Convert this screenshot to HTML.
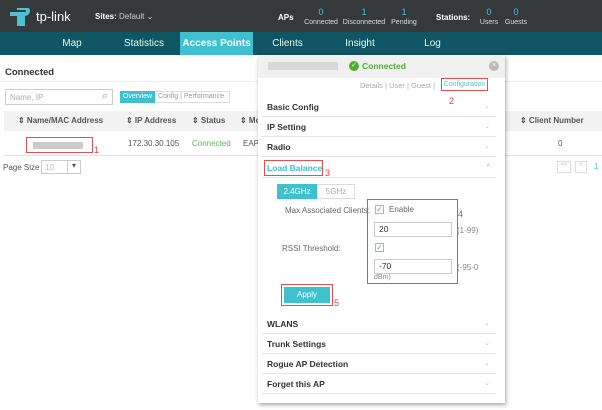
<!DOCTYPE html>
<html><head><meta charset="utf-8"><style>
*{box-sizing:border-box;margin:0;padding:0}
body{width:602px;height:410px;overflow:hidden;background:#fff;font-family:"Liberation Sans",sans-serif;font-size:8px;color:#555;position:relative}
.a{position:absolute}
.top{left:0;top:0;width:602px;height:32px;background:#36393b}
.nav{left:0;top:32px;width:602px;height:23px;background:#0f5563}
.nav span{position:absolute;top:0;height:23px;line-height:23px;color:#dfe;font-size:10px;text-align:center}
.b{font-weight:bold}
.cell{position:absolute;line-height:20px;font-size:8px}
.row{position:absolute;left:262px;width:234px;height:20px;border-bottom:1px solid #e4e4e4;font-weight:bold;font-size:8.5px;color:#333;line-height:20px;padding-left:5px}
.row i{position:absolute;right:6px;top:0;font-style:normal;color:#bbb;font-size:7px;font-weight:normal}
.red{border:1px solid #e05050}
.rn{color:#e04040;font-size:9px}
.inp{position:absolute;border:1px solid #ccc;background:#fff;height:15px;font-size:8.5px;color:#333;padding-left:4px;line-height:13px}
.cb{position:absolute;width:9px;height:9px;border:1px solid #7cc;color:#3bb;font-size:8px;line-height:7px;text-align:center}
</style></head><body>
<div class="a top"></div>
<svg class="a" style="left:8px;top:8px" width="26" height="18" viewBox="0 0 26 18"><path d="M2 6h9v10h4V6h2a3 3 0 0 0 0-6H9" fill="none" stroke="#4cc3cf" stroke-width="4"/></svg>
<div class="a" style="left:36px;top:9px;color:#fff;font-size:13px">tp-link</div>
<div class="a b" style="left:95px;top:12px;color:#fff;font-size:8px">Sites:<span style="font-weight:normal;color:#ccc"> Default ⌄</span></div>
<div class="a b" style="left:278px;top:13px;color:#fff">APs</div>
<div class="a" style="left:303px;top:8px;width:36px;text-align:center;color:#4cc3cf;font-size:9px;line-height:9px">0<br><span style="font-size:7px;color:#ddd">Connected</span></div>
<div class="a" style="left:340px;top:8px;width:48px;text-align:center;color:#4cc3cf;font-size:9px;line-height:9px">1<br><span style="font-size:7px;color:#ddd">Disconnected</span></div>
<div class="a" style="left:390px;top:8px;width:28px;text-align:center;color:#4cc3cf;font-size:9px;line-height:9px">1<br><span style="font-size:7px;color:#ddd">Pending</span></div>
<div class="a b" style="left:436px;top:13px;color:#fff">Stations:</div>
<div class="a" style="left:478px;top:8px;width:22px;text-align:center;color:#4cc3cf;font-size:9px;line-height:9px">0<br><span style="font-size:7px;color:#ddd">Users</span></div>
<div class="a" style="left:502px;top:8px;width:28px;text-align:center;color:#4cc3cf;font-size:9px;line-height:9px">0<br><span style="font-size:7px;color:#ddd">Guests</span></div>
<div class="a nav">
<span style="left:42px;width:60px">Map</span>
<span style="left:110px;width:68px">Statistics</span>
<span style="left:180px;width:73px;background:#3fc0cf;color:#fff;font-weight:bold">Access Points</span>
<span style="left:255px;width:65px">Clients</span>
<span style="left:325px;width:70px">Insight</span>
<span style="left:400px;width:65px">Log</span>
</div>
<div class="a b" style="left:5px;top:67px;font-size:9.5px;color:#333">Connected</div>
<div class="a" style="left:0;top:81px;width:602px;border-top:1px solid #eee"></div>
<div class="a" style="left:5px;top:89px;width:108px;height:16px;border:1px solid #ccc;color:#aaa;padding:3px 4px">Name, IP<span style="position:absolute;right:4px;top:0;font-size:11px;color:#999">⌕</span></div>
<div class="a" style="left:120px;top:91px;width:35px;height:12px;background:#3fc0cf;color:#fff;font-size:7px;line-height:12px;text-align:center">Overview</div>
<div class="a" style="left:155px;top:91px;width:75px;height:12px;border:1px solid #ddd;font-size:7px;line-height:10px;color:#999">&nbsp;Config | Performance</div>
<div class="a" style="left:4px;top:111px;width:598px;height:20px;background:#f2f2f2"></div>
<div class="cell b" style="left:18px;top:111px;color:#555">⇕ Name/MAC Address</div>
<div class="cell b" style="left:126px;top:111px">⇕ IP Address</div>
<div class="cell b" style="left:192px;top:111px">⇕ Status</div>
<div class="cell b" style="left:240px;top:111px">⇕ Mo</div>
<div class="cell b" style="left:520px;top:111px">⇕ Client Number</div>
<div class="a" style="left:4px;top:155px;width:598px;border-top:1px solid #e4e4e4"></div>
<div class="a red" style="left:26px;top:137px;width:67px;height:16px"><div style="margin:4px 6px;height:7px;background:#ccc;width:50px"></div></div>
<div class="a rn" style="left:94px;top:145px">1</div>
<div class="cell" style="left:128px;top:134px">172.30.30.105</div>
<div class="cell" style="left:192px;top:134px;color:#5cb85c">Connected</div>
<div class="cell" style="left:243px;top:134px">EAP</div>
<div class="cell" style="left:558px;top:134px">0</div>
<div class="a" style="left:3px;top:163px">Page Size</div>
<div class="a" style="left:41px;top:160px;width:40px;height:14px;border:1px solid #ccc;color:#bbb;padding:2px 3px">10<span style="position:absolute;right:0;top:0;width:13px;height:12px;border-left:1px solid #ccc;text-align:center;color:#555">▾</span></div>
<div class="a" style="left:557px;top:161px;width:14px;height:12px;border:1px solid #ddd;font-size:6px;color:#bbb;text-align:center">&lt;&lt;</div>
<div class="a" style="left:575px;top:161px;width:12px;height:12px;border:1px solid #ddd;font-size:6px;color:#bbb;text-align:center">&lt;</div>
<div class="a" style="left:594px;top:162px;color:#4cc3cf">1</div>

<div class="a" style="left:258px;top:55px;width:247px;height:348px;background:#fff;box-shadow:1px 2px 4px rgba(0,0,0,.35)"></div>
<div class="a" style="left:258px;top:55px;width:247px;height:23px;background:#f0f0f0"></div>
<div class="a" style="left:268px;top:62px;width:70px;height:8px;background:#d8d8d8"></div>
<div class="a" style="left:349px;top:61px;width:10px;height:10px;border-radius:50%;background:#4caf30;color:#fff;font-size:7px;line-height:10px;text-align:center">✓</div>
<div class="a b" style="left:362px;top:61px;color:#4caf30;font-size:8.5px">Connected</div>
<div class="a" style="left:489px;top:61px;width:10px;height:10px;border-radius:50%;background:#bbb;color:#fff;font-size:7px;line-height:10px;text-align:center">×</div>
<div class="a" style="left:360px;top:81px;color:#aaa;font-size:7.5px">Details | User | Guest |</div>
<div class="a red" style="left:441px;top:78px;width:47px;height:13px;color:#4cc3cf;font-size:7px;line-height:11px;text-align:center">Configuration</div>
<div class="a rn" style="left:449px;top:96px">2</div>
<div class="row" style="top:97px">Basic Config<i>⌄</i></div>
<div class="row" style="top:117px">IP Setting<i>⌄</i></div>
<div class="row" style="top:137px">Radio<i>⌄</i></div>
<div class="row" style="top:158px;color:#3fc0cf"><span class="red" style="position:absolute;left:2px;top:2px;height:16px;width:59px"></span>Load Balance<i style="color:#3fc0cf">^</i></div>
<div class="a rn" style="left:325px;top:168px">3</div>
<div class="a" style="left:277px;top:184px;width:40px;height:15px;background:#3fc0cf;color:#fff;line-height:15px;text-align:center">2.4GHz</div>
<div class="a" style="left:317px;top:184px;width:38px;height:15px;border:1px solid #ddd;color:#aaa;line-height:13px;text-align:center">5GHz</div>
<div class="a" style="left:285px;top:206px;color:#666">Max Associated Clients:</div>
<div class="a" style="left:282px;top:244px;color:#666">RSSI Threshold:</div>
<div class="a red" style="left:367px;top:199px;width:91px;height:85px"></div>
<div class="a rn" style="left:458px;top:209px">4</div>
<div class="cb" style="left:375px;top:205px">✓</div>
<div class="a" style="left:389px;top:205px;color:#666">Enable</div>
<div class="inp" style="left:374px;top:222px;width:78px">20</div>
<div class="a" style="left:457px;top:226px;color:#888">(1-99)</div>
<div class="cb" style="left:375px;top:243px">✓</div>
<div class="inp" style="left:374px;top:259px;width:78px">-70</div>
<div class="a" style="left:457px;top:263px;color:#888">(-95-0</div>
<div class="a" style="left:374px;top:274px;color:#888;font-size:7px">dBm)</div>
<div class="a red" style="left:281px;top:284px;width:52px;height:22px;padding:2px"><div style="background:#3fc0cf;color:#fff;height:16px;line-height:16px;text-align:center">Apply</div></div>
<div class="a rn" style="left:334px;top:298px">5</div>
<div class="row" style="top:314px">WLANS<i>⌄</i></div>
<div class="row" style="top:334px">Trunk Settings<i>⌄</i></div>
<div class="row" style="top:354px">Rogue AP Detection<i>⌄</i></div>
<div class="row" style="top:374px">Forget this AP<i>⌄</i></div>
</body></html>
